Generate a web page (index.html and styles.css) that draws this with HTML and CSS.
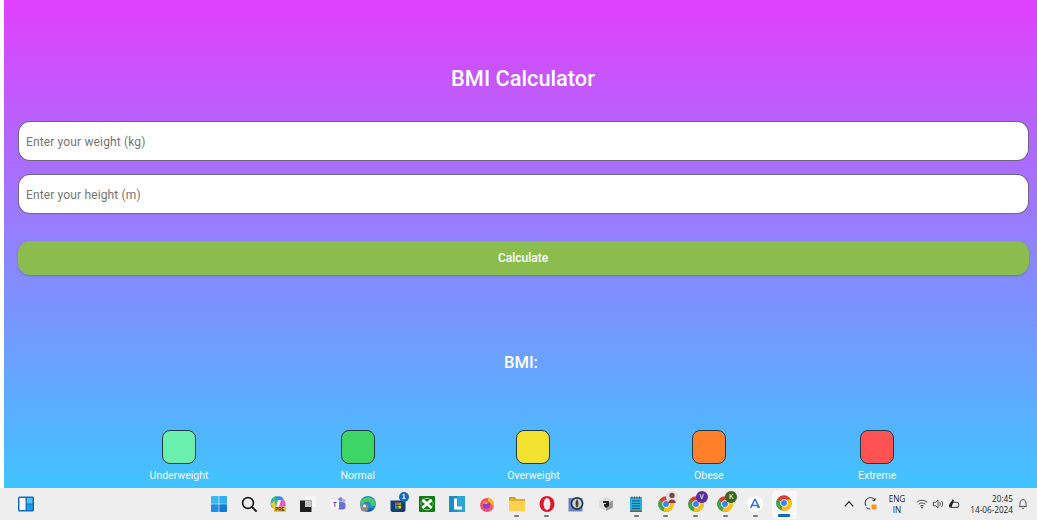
FILE: index.html
```html
<!DOCTYPE html>
<html lang="en">
<head>
<meta charset="utf-8">
<title>BMI Calculator</title>
<link rel="stylesheet" href="styles.css">
</head>
<body>
<svg class="defs" width="0" height="0" aria-hidden="true">
  <defs>
    <symbol id="chrome" viewBox="0 0 24 24">
      <circle cx="12" cy="12" r="11.5" fill="#e33b2e"/>
      <path d="M12 12 L2 6 A11.5 11.5 0 0 0 8 22.8 Z" fill="#34a853"/>
      <path d="M12 7 H22.600 A11.500 11.500 0 0 1 8 22.800 L12 12 Z" fill="#fbc116"/>
      <circle cx="12" cy="12" r="5.600" fill="#fff"/>
      <circle cx="12" cy="12" r="4.400" fill="#3f80ea"/>
    </symbol>
  </defs>
</svg>
<main class="app">
  <h1 class="title">BMI Calculator</h1>
  <form class="form">
    <input class="field" type="text" placeholder="Enter your weight (kg)">
    <input class="field" type="text" placeholder="Enter your height (m)">
    <button class="calc" type="button">Calculate</button>
  </form>
  <p class="result">BMI:</p>
  <ul class="legend">
    <li class="legend-item"><span class="swatch under"></span><span class="legend-label">Underweight</span></li>
    <li class="legend-item"><span class="swatch normal"></span><span class="legend-label">Normal</span></li>
    <li class="legend-item"><span class="swatch over"></span><span class="legend-label">Overweight</span></li>
    <li class="legend-item"><span class="swatch obese"></span><span class="legend-label">Obese</span></li>
    <li class="legend-item"><span class="swatch extreme"></span><span class="legend-label">Extreme</span></li>
  </ul>
</main>
<footer class="taskbar">
  <div class="tb-left">
    <svg class="ico" viewBox="0 0 16 16"><rect x="0" y="0.500" width="16" height="15" rx="1.500" fill="#0f6cbd"/><rect x="1.500" y="2" width="6" height="12" fill="#fff"/><rect x="8.800" y="2" width="5.700" height="5.500" fill="#4fc3f7"/><rect x="8.800" y="8.500" width="5.700" height="5.500" fill="#1e9be8"/></svg>
  </div>
  <div class="tb-center">
    <span class="tb-slot"><svg class="ico" viewBox="0 0 16 16"><rect x="0" y="0" width="7.700" height="7.700" rx=".8" fill="#3ab8f0"/><rect x="8.300" y="0" width="7.700" height="7.700" rx=".8" fill="#33aeee"/><rect x="0" y="8.300" width="7.700" height="7.700" rx=".8" fill="#1d92e2"/><rect x="8.300" y="8.300" width="7.700" height="7.700" rx=".8" fill="#0f7cd8"/></svg></span>
    <span class="tb-slot"><svg class="ico" viewBox="0 0 16 16"><circle cx="7" cy="7" r="5.400" fill="none" stroke="#222" stroke-width="1.700"/><path d="M11 11 L15 15" stroke="#222" stroke-width="1.900" stroke-linecap="round"/></svg></span>
    <span class="tb-slot"><svg class="ico" viewBox="0 0 16 16"><path d="M0.500 8 C0.500 3 3 0.500 6 0.500 H10 L7 12 H3 C1.500 12 0.500 10 0.500 8 Z" fill="#37b98c"/><path d="M5 0.500 H10.500 C12 0.500 13 2 13.500 4 L7 4.500 Z" fill="#2d8fe8"/><path d="M8.500 3.500 H13.500 C15.500 5.500 16 8 15.500 10 L11 12 H6 Z" fill="#dd5ad6"/><path d="M0.500 8 L4.500 5 L6.500 12 H3 Z" fill="#f5c33b"/><path d="M8 4 L11 4 L9 11 L6 11 Z" fill="#f4f0fa"/><rect x="4" y="10.500" width="12" height="5.500" rx=".8" fill="#f7c325"/><text class="pre" x="10" y="15">PRE</text></svg></span>
    <span class="tb-slot"><svg class="ico" viewBox="0 0 16 16"><rect x="5" y="0" width="11" height="11" fill="#f6f6f6"/><rect x="0" y="4.500" width="11.500" height="11.500" fill="#1f1f1f"/><rect x="5" y="4.500" width="6.500" height="6.500" fill="#c4c4c4"/></svg></span>
    <span class="tb-slot"><svg class="ico" viewBox="0 0 16 16"><circle cx="10.500" cy="3.500" r="2.200" fill="#7b83eb"/><circle cx="14" cy="4.700" r="1.400" fill="#a3a9ef"/><rect x="7.500" y="6" width="8" height="7.500" rx="3" fill="#6a70d8"/><rect x="0.500" y="4" width="8.500" height="8.500" rx="1" fill="#fff"/><text class="teams" x="4.700" y="11">T</text></svg></span>
    <span class="tb-slot"><svg class="ico" viewBox="0 0 16 16"><circle cx="8" cy="8" r="8" fill="#1a8fc7"/><path d="M0.500 6 C3 0 13 -1 15.800 7 C16.200 10 12 11 10.500 9 C11.500 6 8 4.500 5 6 C3 7 2 10 3 13 C1 11 0 9 0.500 6 Z" fill="#4fc56f"/><path d="M3 13 C2 10 4 7 6 7 C4.500 10 8 13.500 14 12 C11 16.500 5 16.500 3 13 Z" fill="#0f5fb0"/><circle cx="4.500" cy="11.500" r="4" fill="#8c8c8c"/><circle cx="4.500" cy="10" r="1.500" fill="#e8e8e8"/></svg></span>
    <span class="tb-slot"><svg class="ico" viewBox="0 0 16 16"><path d="M0.500 4.500 H15.500 V13.500 C15.500 15 14.500 16 13.500 16 H2.500 C1.500 16 0.500 15 0.500 13.500 Z" fill="#123f76"/><rect x="5" y="6.500" width="2.800" height="2.800" fill="#f25022"/><rect x="8.300" y="6.500" width="2.800" height="2.800" fill="#7fba00"/><rect x="5" y="9.800" width="2.800" height="2.800" fill="#00a4ef"/><rect x="8.300" y="9.800" width="2.800" height="2.800" fill="#ffb900"/></svg><span class="badge">1</span></span>
    <span class="tb-slot"><svg class="ico" viewBox="0 0 16 16"><rect width="16" height="16" rx="1" fill="#107c10"/><circle cx="8" cy="8" r="6.300" fill="#fff"/><path d="M4.500 2.500 L8 6 L11.500 2.500 Z M3.500 13.500 L8 9.800 L12.500 13.500 Z M2.200 5 L6 8 L2.200 11 Z M13.800 5 L10 8 L13.800 11 Z" fill="#107c10"/></svg></span>
    <span class="tb-slot"><svg class="ico" viewBox="0 0 16 16"><rect width="16" height="16" fill="#2aa3d9"/><path d="M0 0 H8 V16 H0 Z" fill="#1b8dc6"/><path d="M5 2.500 H8 V10.500 H13 V13.500 H5 Z" fill="#fff"/></svg></span>
    <span class="tb-slot"><svg class="ico" viewBox="0 0 16 16"><circle cx="8" cy="9" r="7" fill="#f2546f"/><path d="M9 1 C14 3 16 8 14.500 12 C13 8 11 6 9 5 Z" fill="#ffb52e"/><circle cx="7.500" cy="9" r="3.700" fill="#8a3fd6"/><path d="M3.500 7 C5 4.500 8 5 10.500 6 L8 8 L5 8 Z" fill="#ff8a2b"/></svg></span>
    <span class="tb-slot running"><svg class="ico" viewBox="0 0 16 16"><path d="M0 1 H6 L7.500 3 H0 Z" fill="#d8a21f"/><rect x="0" y="3" width="16" height="12" fill="#fbd24c"/><rect x="0" y="3" width="16" height="2" fill="#e3ac2a"/></svg></span>
    <span class="tb-slot running"><svg class="ico" viewBox="0 0 16 16"><ellipse cx="8" cy="8" rx="7.500" ry="8" fill="#e0182d"/><ellipse cx="8" cy="8" rx="3.400" ry="6" fill="#efefef"/></svg></span>
    <span class="tb-slot"><svg class="ico" viewBox="0 0 16 16"><rect x="0.500" y="2" width="14" height="13.500" fill="#6c83c4"/><circle cx="9" cy="7.500" r="6.500" fill="#223a55"/><circle cx="9" cy="7.500" r="4.700" fill="#cfd8dc"/><path d="M9 3 C7 5 7 10 9 12 C11 10 11 5 9 3 Z" fill="#5a3d20"/></svg></span>
    <span class="tb-slot"><svg class="ico" viewBox="0 0 16 16"><path d="M8 1 L15 4.500 V11.500 L8 15 L1 11.500 V4.500 Z" fill="#dcdcdc"/><path d="M8 8 L15 4.500 V11.500 L8 15 Z" fill="#9a9a9a"/><path d="M5 5 H11 V10 L8 12 L6 10 V8 H8 V7 H5 Z" fill="#222"/></svg></span>
    <span class="tb-slot running"><svg class="ico" viewBox="0 0 16 16"><rect x="2" y="1" width="12" height="15" fill="#29aee0"/><rect x="2" y="14.500" width="12" height="1.500" fill="#8a5a2b"/><path d="M4 0.500 V2.500 M6.500 0.500 V2.500 M9 0.500 V2.500 M11.500 0.500 V2.500" stroke="#444" stroke-width="1"/><path d="M4 5 H12 M4 7.500 H12 M4 10 H12 M4 12.500 H12" stroke="#0c5c85" stroke-width="1"/></svg></span>
    <span class="tb-slot running"><svg class="ico"><use href="#chrome"/></svg><svg class="avatar" viewBox="0 0 10 10"><circle cx="5" cy="5" r="5" fill="#dfe3e6"/><circle cx="5" cy="3.700" r="2.200" fill="#7a4a35"/><path d="M1.800 10 C2 6 8 6 8.200 10 Z" fill="#8c3b3b"/></svg></span>
    <span class="tb-slot running"><svg class="ico"><use href="#chrome"/></svg><span class="profile violet">V</span></span>
    <span class="tb-slot running"><svg class="ico"><use href="#chrome"/></svg><span class="profile moss">K</span></span>
    <span class="tb-slot running"><svg class="ico" viewBox="0 0 16 16"><circle cx="8" cy="8" r="8" fill="#fff"/><path d="M8 3 L3.500 12 M8 3 L12.500 12 M4 9.500 H12" stroke="#2a6fdb" stroke-width="1.500" fill="none"/><path d="M10 6 L13 12 H10 Z" fill="#35a853"/></svg></span>
    <span class="tb-slot active"><svg class="ico"><use href="#chrome"/></svg></span>
  </div>
  <div class="tray">
    <svg class="tray-ico chev" viewBox="0 0 10 10"><path d="M1.500 7 L5 3 L8.500 7" fill="none" stroke="#222" stroke-width="1"/></svg>
    <svg class="tray-ico sync" viewBox="0 0 14 14"><path d="M2 9 A5 5 0 0 1 11 3 M11 1 V3.500 H8.500" fill="none" stroke="#333" stroke-width="1"/><path d="M2.500 10.500 A5 5 0 0 0 6 12" fill="none" stroke="#333" stroke-width="1"/><rect x="7.500" y="7.500" width="5" height="5" rx="1" fill="#ff9416"/></svg>
    <span class="lang">ENG<br>IN</span>
    <span class="tray-group">
      <svg class="tray-ico" viewBox="0 0 14 14"><path d="M1 5 C4 2 10 2 13 5 M3 7.300 C5 5.300 9 5.300 11 7.300 M5 9.400 C6 8.500 8 8.500 9 9.400" fill="none" stroke="#333" stroke-width="1"/><circle cx="7" cy="11" r="1" fill="#333"/></svg>
      <svg class="tray-ico" viewBox="0 0 14 14"><path d="M1.500 5 H4 L7 2.500 V11.500 L4 9 H1.500 Z" fill="none" stroke="#333" stroke-width="1"/><path d="M9 5 C10 6 10 8 9 9 M11 3.500 C12.800 5.500 12.800 8.500 11 10.500" fill="none" stroke="#333" stroke-width="1"/></svg>
      <svg class="tray-ico" viewBox="0 0 14 14"><rect x="2.500" y="5" width="10" height="6" rx="2" fill="none" stroke="#222" stroke-width="1"/><path d="M1 9 L5.500 1.500 L7 3 L4 11 H2 Z" fill="#222"/></svg>
    </span>
    <span class="clock">20:45<br>14-06-2024</span>
    <svg class="tray-ico bell" viewBox="0 0 14 14"><path d="M3 10 C3.500 9 3.500 8 3.500 6 C3.500 3.500 5 2 7 2 C9 2 10.500 3.500 10.500 6 C10.500 8 10.500 9 11 10 Z M5.700 11.500 C6 12.500 8 12.500 8.300 11.500" fill="none" stroke="#333" stroke-width="1"/></svg>
  </div>
</footer>
</body>
</html>
```

FILE: styles.css
```css
* { box-sizing: border-box; }
html, body { margin: 0; height: 100%; }
body {
  width: 1037px;
  height: 520px;
  overflow: hidden;
  background: #fff;
  font-family: Roboto, "Liberation Sans", sans-serif;
  display: flex;
  flex-direction: column;
}
.defs { position: absolute; }
.app {
  height: 488px;
  margin-left: 4px;
  padding: 66px 8.5px 0 13.5px;
  background: linear-gradient(180deg, #e040fb 0%, #40c4ff 100%);
  display: flex;
  flex-direction: column;
  color: #fff;
}
.title {
  margin: 0;
  height: 25px;
  line-height: 25px;
  font-size: 21.8px;
  font-weight: 500;
  text-align: center;
}
.form {
  margin-top: 30px;
  display: flex;
  flex-direction: column;
}
.field {
  height: 40px;
  margin-bottom: 13.4px;
  padding: 2px 8px 0 7.5px;
  border: 1px solid rgba(60, 50, 90, .75);
  border-radius: 12px;
  background: #fff;
  font: 400 12px Roboto, sans-serif;
  letter-spacing: .14px;
  outline: none;
}
.field::placeholder { color: #757575; opacity: 1; }
.calc {
  height: 34px;
  margin-top: 13.6px;
  border: 0;
  border-radius: 12px;
  background: #8abd4e;
  box-shadow: 0 1px 2px rgba(0, 0, 0, .2);
  color: #fff;
  font: 500 12px Roboto, sans-serif;
}
.result {
  margin: 77px 0 0;
  padding-right: 4px;
  height: 21px;
  line-height: 21px;
  font-size: 16.5px;
  font-weight: 500;
  text-align: center;
}
.legend {
  list-style: none;
  margin: 57px 0 0;
  padding: 0;
  display: flex;
  justify-content: space-evenly;
}
.legend-item {
  display: flex;
  flex-direction: column;
  align-items: center;
}
.swatch {
  width: 34px;
  height: 34px;
  border: 1px solid #1f3a40;
  border-radius: 8px;
}
.under { background: #69f0ae; }
.normal { background: #3dd666; }
.over { background: #f0e22e; }
.obese { background: #ff7f2a; }
.extreme { background: #ff5252; }
.legend-label {
  margin-top: 5px;
  font-size: 10.5px;
  line-height: 13px;
  color: #f4fbff;
}
.taskbar {
  position: relative;
  height: 32px;
  background: #eeeeee;
  display: flex;
  align-items: center;
  color: #222;
  font-family: "Open Sans", "Noto Sans", sans-serif;
}
.tb-left { margin-left: 18px; display: flex; }
.tb-center { margin-left: 170px; height: 32px; display: flex; align-items: flex-start; }
.tb-slot {
  position: relative;
  width: 29.8px;
  height: 32px;
  display: flex;
  align-items: center;
  justify-content: center;
}
.ico { width: 16px; height: 16px; display: block; }
.pre { font: 700 4.5px "Liberation Sans", sans-serif; fill: #222; text-anchor: middle; }
.teams { font: 700 6.5px "Liberation Sans", sans-serif; fill: #4b53bc; text-anchor: middle; }
.running::after {
  content: "";
  position: absolute;
  left: 50%;
  bottom: 3px;
  width: 5px;
  height: 2px;
  margin-left: -2.5px;
  border-radius: 1px;
  background: #777;
}
.active {
  width: 25px;
  height: 28px;
  margin: 3px 0 0 1.7px;
  padding-bottom: 4px;
  border-radius: 3px;
  background: #f8f8f8;
}
.active::after {
  content: "";
  position: absolute;
  left: 6.5px;
  bottom: 2px;
  width: 12px;
  height: 3px;
  border-radius: 1px;
  background: #0f6cbd;
}
.badge {
  position: absolute;
  top: 4px;
  right: 4px;
  width: 10px;
  height: 10px;
  border-radius: 50%;
  background: #0f6cbd;
  color: #fff;
  font: 700 7px/10px "Liberation Sans", sans-serif;
  text-align: center;
}
.profile {
  position: absolute;
  top: 3px;
  right: 3px;
  width: 12px;
  height: 12px;
  border-radius: 50%;
  color: #ddd;
  font: 700 6.5px/12px "Liberation Sans", sans-serif;
  text-align: center;
}
.violet { background: #5a2ca0; }
.moss { background: #33691e; }
.avatar {
  position: absolute;
  top: 3px;
  right: 3px;
  width: 12px;
  height: 12px;
}
.tray {
  position: absolute;
  left: 843px;
  top: 0;
  height: 32px;
  display: flex;
  align-items: center;
}
.tray-ico { width: 12px; height: 12px; display: block; flex: none; }
.chev { margin-right: 9px; }
.sync { width: 14px; height: 14px; }
.lang {
  margin-left: 6px;
  width: 26px;
  text-align: center;
  font-size: 8.2px;
  line-height: 11px;
}
.tray-group { margin-left: 6px; display: flex; gap: 4px; }
.clock {
  margin-left: 6px;
  width: 47px;
  text-align: right;
  font-size: 8.2px;
  line-height: 11px;
}
.bell { margin-left: 4px; }
```
